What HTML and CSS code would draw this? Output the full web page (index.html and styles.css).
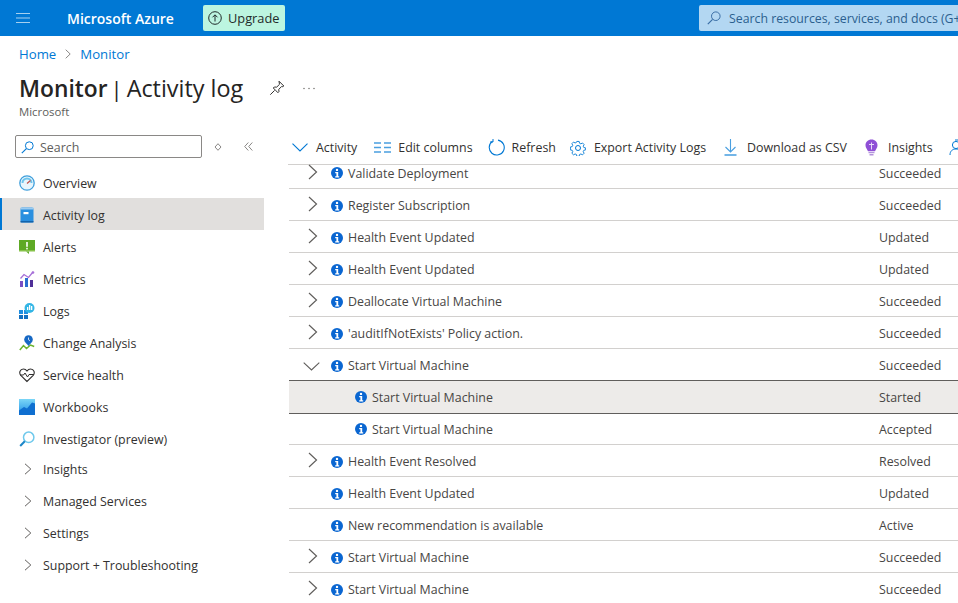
FILE: index.html
```html
<!DOCTYPE html>
<html lang="en">
<head>
<meta charset="utf-8">
<title>Monitor | Activity log</title>
<link rel="stylesheet" href="styles.css">
</head>
<body>
<svg class="defs" width="0" height="0" aria-hidden="true">
  <symbol id="info" viewBox="0 0 12 12"><circle cx="6" cy="6" r="6" fill="#0a66d1"/><circle cx="6" cy="2.900" r="1.200" fill="#fff"/><path d="M4.200 5h3v4.200h1V10.400H4.200V9.200h1.200V6.200H4.200z" fill="#fff"/></symbol>
  <symbol id="right" viewBox="0 0 10 16"><path d="M1 1l7.500 7L1 15" fill="none" stroke="#605e5c" stroke-width="1.200"/></symbol>
  <symbol id="nav-right" viewBox="0 0 8 12"><path d="M1 .8L6.800 6 1 11.200" fill="none" stroke="#605e5c" stroke-width="1"/></symbol>
</svg>

<header class="topbar">
  <svg class="burger" width="14" height="10" viewBox="0 0 14 10"><path d="M0 .5h14M0 5h14M0 9.500h14" stroke="#a6d0ef" stroke-width="1.100"/></svg>
  <span class="brand">Microsoft Azure</span>
  <button class="upgrade">
    <svg width="14" height="14" viewBox="0 0 14 14"><circle cx="7" cy="7" r="6.300" fill="none" stroke="#1f2b2a" stroke-width="1"/><path d="M7 10.500V4M4.500 6.300L7 3.800l2.500 2.500" fill="none" stroke="#1f2b2a" stroke-width="1"/></svg>
    <span>Upgrade</span>
  </button>
  <div class="global-search">
    <svg width="14" height="14" viewBox="0 0 14 14"><circle cx="8.800" cy="5.200" r="4.300" fill="none" stroke="#3a6ea5" stroke-width="1"/><path d="M5.600 8.300L.8 13.200" stroke="#3a6ea5" stroke-width="1.200"/></svg>
    <span>Search resources, services, and docs (G+/)</span>
  </div>
</header>

<div class="blade-head">
  <nav class="crumbs">
    <a>Home</a>
    <svg width="6" height="10" viewBox="0 0 6 10"><path d="M.7.700L5.200 5 .7 9.300" fill="none" stroke="#8a8886" stroke-width="1"/></svg>
    <a>Monitor</a>
  </nav>
  <div class="title-row">
    <h1><b>Monitor</b><span class="bar">|</span>Activity log</h1>
    <svg class="pin" width="16" height="16" viewBox="0 0 16 16"><path d="M10 1.200l4.800 4.800-1 .7-1.200-.2-2.800 2.800.1 2.400-1 1-2.300-2.400-2.300-2.300 1-1 2.400.1 2.800-2.800-.2-1.200zM5.600 10.400L1.300 14.700" fill="none" stroke="#323130" stroke-width="1"/></svg>
    <svg width="12" height="3" viewBox="0 0 12 3"><circle cx="1" cy="1.500" r=".7" fill="#605e5c"/><circle cx="6" cy="1.500" r=".7" fill="#605e5c"/><circle cx="11" cy="1.500" r=".7" fill="#605e5c"/></svg>
  </div>
  <div class="sub">Microsoft</div>
</div>

<div class="blade">
  <aside class="side">
    <div class="side-tools">
      <div class="side-search">
        <svg width="13" height="13" viewBox="0 0 13 13"><circle cx="8.300" cy="4.700" r="3.900" fill="none" stroke="#0078d4" stroke-width="1"/><path d="M5.400 7.600L.8 12.200" stroke="#0078d4" stroke-width="1.100"/></svg>
        <span>Search</span>
      </div>
      <svg class="sort" width="8" height="8" viewBox="0 0 8 8"><path d="M4 .7L7 4 4 7.300 1 4z" fill="none" stroke="#8a8886" stroke-width="1"/></svg>
      <svg class="collapse" width="9" height="9" viewBox="0 0 9 9"><path d="M4.300.5L.7 4.500l3.600 4M8.300.5L4.700 4.500l3.600 4" fill="none" stroke="#8a8886" stroke-width="1"/></svg>
    </div>
    <ul class="nav">
      <li><svg width="16" height="16" viewBox="0 0 16 16"><circle cx="8" cy="8" r="7.200" fill="#e8f5fc" stroke="#3f9fdc" stroke-width="1.300"/><path d="M3.500 8a4.500 4.500 0 0 1 9 0" fill="none" stroke="#6fc5ec" stroke-width="2"/><path d="M8 8.500l3.500-3" stroke="#c3504a" stroke-width="1.200"/></svg><span>Overview</span></li>
      <li class="on"><svg width="16" height="16" viewBox="0 0 16 16"><rect x="1.500" y="0.500" width="13" height="15" rx="1.500" fill="#2a8fdf"/><rect x="1.500" y="0.500" width="13" height="2" fill="#9cccf0"/><rect x="1.500" y="14" width="13" height="1.500" fill="#1464ab"/><rect x="4.500" y="5" width="5" height="2.200" fill="#fff"/></svg><span>Activity log</span></li>
      <li><svg width="16" height="16" viewBox="0 0 16 16"><rect x="0" y="1" width="16" height="11" fill="#5ea925"/><rect x="0" y="11" width="16" height="1.500" fill="#86c24a"/><path d="M7 12.500h3v2.500z" fill="#5ea925"/><rect x="7.200" y="3" width="1.600" height="4.800" fill="#fff"/><rect x="7.200" y="8.800" width="1.600" height="1.600" fill="#fff"/></svg><span>Alerts</span></li>
      <li><svg width="16" height="16" viewBox="0 0 16 16"><rect x="1" y="10" width="3" height="6" fill="#7a4fc4"/><rect x="6" y="7" width="3" height="9" fill="#2a6fd0"/><rect x="11" y="9" width="3" height="7" fill="#4f2f98"/><path d="M1.500 7.500L5 3.500l4.500 3L14 1" fill="none" stroke="#a66fd8" stroke-width="1.300"/><circle cx="14" cy="1.500" r="1.300" fill="#a66fd8"/></svg><span>Metrics</span></li>
      <li><svg width="16" height="16" viewBox="0 0 16 16"><rect x="0" y="7" width="4" height="4" fill="#1f8fe0"/><rect x="5" y="7" width="4" height="4" fill="#1f8fe0"/><rect x="0" y="12" width="4" height="4" fill="#1470c0"/><rect x="5" y="12" width="4" height="4" fill="#1470c0"/><circle cx="10.500" cy="5" r="5" fill="#32b5e5"/><rect x="8" y="4" width="1.300" height="3" fill="#fff"/><rect x="10" y="2" width="1.300" height="5" fill="#fff"/><rect x="12" y="3" width="1.300" height="4" fill="#fff"/></svg><span>Logs</span></li>
      <li><svg width="16" height="16" viewBox="0 0 16 16"><path d="M.8 15l3.700-4.500 3 3L11.500 10l3.700 1.500" fill="none" stroke="#6ab42d" stroke-width="1.500"/><circle cx="9.500" cy="4.500" r="4.300" fill="#1668c4"/><path d="M9.500 2.500v2.200l1.500 1" fill="none" stroke="#fff" stroke-width=".8"/><path d="M7 8h5l-2.500 3z" fill="#1668c4"/></svg><span>Change Analysis</span></li>
      <li><svg width="16" height="16" viewBox="0 0 16 16"><path d="M8 14.500L1.800 8.300C-.3 5.800 1 2 4.400 2 6 2 7.200 2.800 8 4c.8-1.200 2-2 3.600-2C15 2 16.300 5.800 14.200 8.300z" fill="none" stroke="#323130" stroke-width="1.100"/><path d="M1 8h3.500l1.500-2 2.500 4L10 7.500h5" fill="none" stroke="#323130" stroke-width="1"/></svg><span>Service health</span></li>
      <li><svg width="16" height="16" viewBox="0 0 16 16"><defs><linearGradient id="wb" x1="0" y1="0" x2="0" y2="1"><stop offset="0" stop-color="#7bd6f7"/><stop offset="1" stop-color="#1d8fe6"/></linearGradient></defs><rect width="16" height="16" fill="url(#wb)"/><path d="M0 16v-4.500L5 8l3 1.500L13 3.500l3 1V16z" fill="#0f6fd0"/></svg><span>Workbooks</span></li>
      <li><svg width="16" height="16" viewBox="0 0 16 16"><circle cx="9.700" cy="6.300" r="5.200" fill="none" stroke="#6fc9ec" stroke-width="1.500"/><path d="M5.800 10.200L1.200 15" stroke="#1b86c8" stroke-width="2"/></svg><span>Investigator (preview)</span></li>
      <li class="group"><svg width="8" height="12"><use href="#nav-right"/></svg><span>Insights</span></li>
      <li class="group"><svg width="8" height="12"><use href="#nav-right"/></svg><span>Managed Services</span></li>
      <li class="group"><svg width="8" height="12"><use href="#nav-right"/></svg><span>Settings</span></li>
      <li class="group"><svg width="8" height="12"><use href="#nav-right"/></svg><span>Support + Troubleshooting</span></li>
    </ul>
  </aside>

  <main class="content">
    <div class="toolbar">
      <div class="tool activity"><svg width="16" height="9" viewBox="0 0 16 9"><path d="M.5.700L8 8 15.500.7" fill="none" stroke="#0078d4" stroke-width="1.100"/></svg><span>Activity</span></div>
      <div class="tool columns"><svg width="17" height="11" viewBox="0 0 17 11"><path d="M0 1h7M10 1h7M0 5.500h7M10 5.500h7M0 10h7M10 10h7" stroke="#4a9fe0" stroke-width="1.300"/></svg><span>Edit columns</span></div>
      <div class="tool refresh"><svg width="17" height="17" viewBox="0 0 17 17"><path d="M10 1.100a7.500 7.500 0 1 1-5.500 1.200" fill="none" stroke="#0078d4" stroke-width="1.100"/><path d="M5 0v3H2" fill="none" stroke="#0078d4" stroke-width="1"/></svg><span>Refresh</span></div>
      <div class="tool export"><svg width="16" height="16" viewBox="0 0 16 16"><circle cx="8" cy="8" r="2.500" fill="none" stroke="#0078d4"/><path d="M6.700.7h2.600l.4 2 1.500.7 1.800-1 1.800 1.800-1 1.800.7 1.500 2 .4v2.200l-2 .4-.7 1.500 1 1.800-1.800 1.800-1.800-1-1.500.7-.4 2H6.700l-.4-2-1.500-.7-1.800 1-1.800-1.800 1-1.800-.7-1.500-2-.4V6.900l2-.4.7-1.500-1-1.800 1.800-1.800 1.800 1 1.500-.7z" transform="translate(.8 .8) scale(.9)" fill="none" stroke="#0078d4" stroke-width="1"/></svg><span>Export Activity Logs</span></div>
      <div class="tool download"><svg width="15" height="17" viewBox="0 0 15 17"><path d="M7.500 0v13M2.500 8l5 5 5-5" fill="none" stroke="#4a9fe0" stroke-width="1.100"/><path d="M1.500 16h12" stroke="#0078d4" stroke-width="1.100"/></svg><span>Download as CSV</span></div>
      <div class="tool bulb"><svg width="13" height="17" viewBox="0 0 13 17"><path d="M6.500.5C3 .5.500 3 .5 6.200c0 2.400 1.500 3.800 2.500 6h7c1-2.200 2.500-3.600 2.500-6C12.500 3 10 .5 6.500.5z" fill="#8f4fd6"/><path d="M3.500 13h6v1.300h-6zM4.500 15h4v1.500h-4z" fill="#b393dc"/><path d="M6.500 3.500v7M4 5.500h5" stroke="#e8daf8" stroke-width="1"/></svg><span>Insights</span></div>
      <div class="tool"><svg width="15" height="17" viewBox="0 0 15 17"><circle cx="7" cy="6" r="3.600" fill="none" stroke="#0078d4"/><path d="M1 16c0-4 2.500-6 6-6s6 2 6 6" fill="none" stroke="#0078d4"/><path d="M6 1h7" stroke="#0078d4"/></svg></div>
    </div>
    <div class="list">
      <div class="row clip"><svg class="chev" width="10" height="16"><use href="#right"/></svg><svg class="i" width="12" height="12"><use href="#info"/></svg><span class="name">Validate Deployment</span><span class="state">Succeeded</span></div>
      <div class="row"><svg class="chev" width="10" height="16"><use href="#right"/></svg><svg class="i" width="12" height="12"><use href="#info"/></svg><span class="name">Register Subscription</span><span class="state">Succeeded</span></div>
      <div class="row"><svg class="chev" width="10" height="16"><use href="#right"/></svg><svg class="i" width="12" height="12"><use href="#info"/></svg><span class="name">Health Event Updated</span><span class="state">Updated</span></div>
      <div class="row"><svg class="chev" width="10" height="16"><use href="#right"/></svg><svg class="i" width="12" height="12"><use href="#info"/></svg><span class="name">Health Event Updated</span><span class="state">Updated</span></div>
      <div class="row"><svg class="chev" width="10" height="16"><use href="#right"/></svg><svg class="i" width="12" height="12"><use href="#info"/></svg><span class="name">Deallocate Virtual Machine</span><span class="state">Succeeded</span></div>
      <div class="row"><svg class="chev" width="10" height="16"><use href="#right"/></svg><svg class="i" width="12" height="12"><use href="#info"/></svg><span class="name">'auditIfNotExists' Policy action.</span><span class="state">Succeeded</span></div>
      <div class="row"><svg class="down" width="17" height="9" viewBox="0 0 17 9"><path d="M.7.700L8.500 8 16.300.7" fill="none" stroke="#605e5c" stroke-width="1.100"/></svg><svg class="i" width="12" height="12"><use href="#info"/></svg><span class="name">Start Virtual Machine</span><span class="state">Succeeded</span></div>
      <div class="row child sel"><svg class="i" width="12" height="12"><use href="#info"/></svg><span class="name">Start Virtual Machine</span><span class="state">Started</span></div>
      <div class="row child after-sel"><svg class="i" width="12" height="12"><use href="#info"/></svg><span class="name">Start Virtual Machine</span><span class="state">Accepted</span></div>
      <div class="row"><svg class="chev" width="10" height="16"><use href="#right"/></svg><svg class="i" width="12" height="12"><use href="#info"/></svg><span class="name">Health Event Resolved</span><span class="state">Resolved</span></div>
      <div class="row"><svg class="i" width="12" height="12"><use href="#info"/></svg><span class="name">Health Event Updated</span><span class="state">Updated</span></div>
      <div class="row"><svg class="i" width="12" height="12"><use href="#info"/></svg><span class="name">New recommendation is available</span><span class="state">Active</span></div>
      <div class="row"><svg class="chev" width="10" height="16"><use href="#right"/></svg><svg class="i" width="12" height="12"><use href="#info"/></svg><span class="name">Start Virtual Machine</span><span class="state">Succeeded</span></div>
      <div class="row"><svg class="chev" width="10" height="16"><use href="#right"/></svg><svg class="i" width="12" height="12"><use href="#info"/></svg><span class="name">Start Virtual Machine</span><span class="state">Succeeded</span></div>
    </div>
  </main>
</div>
</body>
</html>
```
FILE: styles.css
```css
* { box-sizing: border-box; }
html, body { margin: 0; height: 603px; overflow: hidden; background: #fff; }
body { font-family: "Open Sans", "Noto Sans", sans-serif; font-size: 12.4px; color: #323130; }
svg { display: block; flex: none; }
.defs { position: absolute; }

.topbar { height: 36px; background: #0078d4; display: flex; align-items: center; padding-left: 16px; overflow: hidden; }
.burger { margin-right: 37px; }
.brand { width: 136px; flex: none; color: #fff; font-size: 14px; font-weight: 600; white-space: nowrap; }
.upgrade { width: 82px; height: 26px; flex: none; border: 0; border-radius: 2px; background: #bcf5e0; display: flex; align-items: center; gap: 6px; padding: 0 0 0 5px; font: 500 12.8px "Open Sans", sans-serif; color: #1f2b2a; }
.global-search { margin-left: 414px; width: 300px; flex: none; height: 26px; border-radius: 2px; background: #b3d7f2; display: flex; align-items: center; gap: 8px; padding-left: 8px; font-size: 12.3px; color: #2b5f8f; white-space: nowrap; }

.blade-head { height: 88px; padding: 9px 0 0 19px; }
.crumbs { display: flex; align-items: center; gap: 9px; height: 17px; font-size: 13.2px; color: #0078d4; }
.title-row { display: flex; align-items: center; height: 32px; margin-top: 10px; }
h1 { margin: 0; font-size: 23.4px; font-weight: 400; color: #252423; white-space: nowrap; line-height: 32px; width: 250px; }
h1 b { font-weight: 600; font-size: 22.8px; }
.bar { margin: 0 4px 0 3px; font-size: 22px; }
.pin { margin-right: 18px; }
.sub { font-size: 11.4px; color: #605e5c; line-height: 16px; }

.blade { display: flex; height: 479px; }
.side { width: 264px; flex: none; padding-top: 11px; }
.side-tools { display: flex; align-items: center; padding-left: 15px; height: 23px; margin-bottom: 8px; }
.side-search { width: 187px; height: 23px; border: 1px solid #8a8886; border-radius: 2px; display: flex; align-items: center; gap: 6px; padding: 1px 0 0 5px; color: #605e5c; }
.sort { margin-left: 12px; }
.collapse { margin-left: 22px; }
.nav { list-style: none; margin: 0; padding: 0; }
.nav li { height: 32px; display: flex; align-items: center; gap: 8px; padding: 2px 0 0 19px; white-space: nowrap; }
.nav li.on { background: #e1dfdd; box-shadow: inset 2px 0 0 #0078d4; }
.nav li.group { padding-left: 24px; gap: 11px; }
.nav li:nth-child(10) { margin-top: -2px; }

.content { flex: 1; min-width: 0; margin-left: 24px; overflow: hidden; }
.toolbar { height: 29px; margin-top: 11px; padding: 0 0 4px 4px; display: flex; align-items: center; white-space: nowrap; box-shadow: 0 1px 0 #d2d0ce; }
.tool { display: flex; align-items: center; gap: 8px; margin-right: 16px; flex: none; }
.tool.activity { margin-right: 17px; }
.tool.columns { gap: 7px; margin-right: 15px; }
.tool.refresh { gap: 7px; margin-right: 14px; }
.tool.export { margin-right: 17px; }
.tool.download { gap: 9px; margin-right: 18px; }
.tool.bulb { gap: 10px; }
.list { margin-left: 1px; }
.row { height: 32px; display: flex; align-items: center; border-bottom: 1px solid #d2d0ce; position: relative; padding: 2px 0 0 42px; color: #484644; white-space: nowrap; }
.row.clip { height: 25px; padding-top: 0; padding-bottom: 6px; }
.i { margin-right: 5px; }
.chev { position: absolute; left: 19px; top: 7px; }
.clip .chev { top: 0; }
.down { position: absolute; left: 14px; top: 13px; }
.name { flex: none; width: 531px; }
.row.child { padding-left: 66px; }
.row.child .name { width: 507px; }
.row.sel { height: 33px; padding-top: 0; background: #edebe9; border-bottom: 1px solid #605e5c; box-shadow: 0 -1px 0 #605e5c; z-index: 1; }
.row.after-sel { height: 31px; padding-top: 0; }
```
